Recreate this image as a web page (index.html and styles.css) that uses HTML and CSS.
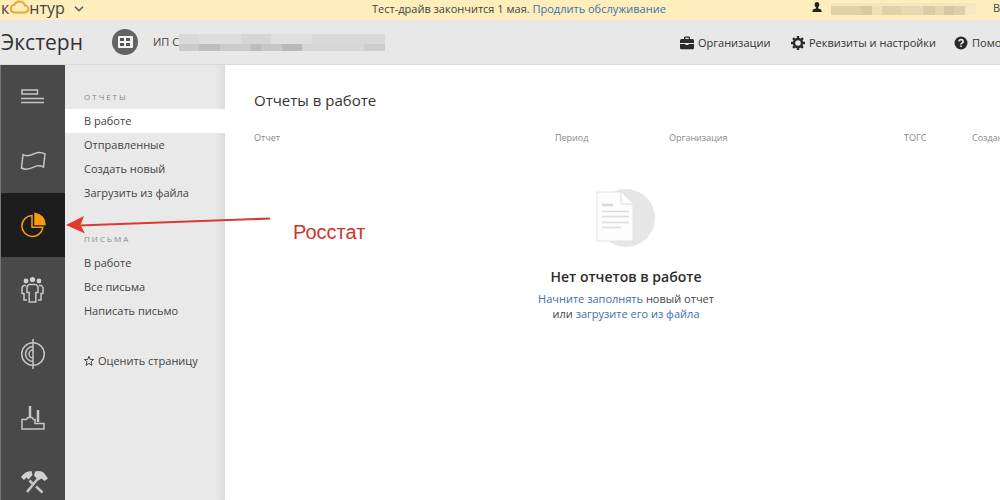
FILE: index.html
```html
<!DOCTYPE html>
<html lang="ru">
<head>
<meta charset="utf-8">
<title>Контур.Экстерн — Отчеты в работе</title>
<link rel="stylesheet" href="styles.css">
</head>
<body>
<div class="app">
  <div class="topbar">
    <a class="logo" href="#" aria-label="контур"><span>к</span><svg class="cloud" viewBox="0 0 20 14" width="20" height="14"><path d="M5 12.500h10.500a3.500 3.500 0 0 0 .6-7A5.800 5.800 0 0 0 5.300 4.800 3.900 3.900 0 0 0 5 12.500z"/></svg><span>нтур</span><svg class="chevron" viewBox="0 0 10 6" width="10" height="6"><path d="M1 .8l4 4 4-4"/></svg></a>
    <p class="trial">Тест-драйв закончится 1 мая. <a href="#">Продлить обслуживание</a></p>
    <div class="account">
      <svg class="user" viewBox="0 0 10 10" width="10" height="10"><path d="M5 0C3.500 0 2.700 1 2.700 2.500c0 1.500.6 2.500 1.300 3v1C2.500 7 .5 7.300.5 8.500V10h9V8.500C9.500 7.300 7.500 7 6 6.500v-1c.7-.5 1.300-1.500 1.300-3C7.300 1 6.500 0 5 0z"/></svg>
      <span class="mask mask-user"></span>
      <a class="exit" href="#">Выйти</a>
    </div>
  </div>

  <header class="header">
    <div class="product">Экстерн</div>
    <button class="org-switch" aria-label="Выбрать сервис"><svg viewBox="0 0 26 26" width="26" height="26"><circle cx="13" cy="13" r="13" fill="#636363"/><rect x="6" y="7" width="15" height="12" rx="1" fill="#f2f2f2"/><path fill="#555" d="M8 9h4v3H8zM14 9h4v3h-4zM8 14h4v3H8zM14 14h4v3h-4z"/></svg></button>
    <div class="org">ИП С<span class="mask mask-org"></span></div>
    <nav class="tools">
      <a class="organizations" href="#"><svg viewBox="0 0 14 14" width="14" height="14"><path d="M4 3V1.800Q4 .5 5.300.5h3.400Q10 .5 10 1.800V3h2.500Q14 3 14 4.500V7H0V4.500Q0 3 1.500 3zM5.300 3h3.400V1.800H5.300zM0 8h5.500v1h3V8H14v4q0 1.200-1.200 1.200H1.200Q0 13.200 0 12z"/></svg>Организации</a>
      <a class="settings" href="#"><svg viewBox="0 0 14 14" width="14" height="14"><circle cx="7" cy="7" r="4" fill="none" stroke="#2b2b2b" stroke-width="2.400"/><path fill="none" stroke="#2b2b2b" stroke-width="2.400" d="M7 0v2.500M7 11.500V14M0 7h2.500M11.500 7H14M2.050 2.050l1.800 1.800M10.150 10.150l1.800 1.800M2.050 11.950l1.800-1.800M10.150 3.850l1.800-1.800"/></svg>Реквизиты и настройки</a>
      <a href="#"><svg viewBox="0 0 14 14" width="14" height="14"><circle cx="7" cy="7" r="6.500"/><path d="M4.800 5.400Q5 3.600 7 3.600t2.200 1.700Q9.200 6.400 8 7 7 7.500 7 8.400M7 9.500v1.500" fill="none" stroke="#eee" stroke-width="1.600"/></svg>Помощь</a>
    </nav>
  </header>

  <div class="body">
    <nav class="rail" aria-label="Разделы">
      <a href="#" aria-label="ФНС"><svg viewBox="0 0 28 28" width="28" height="28"><path d="M3 6h15.500v4H3zM2 14.500h23M2 18.500h23"/></svg></a>
      <a href="#" aria-label="ПФР"><svg viewBox="0 0 28 28" width="28" height="28"><path d="M4 6.500c4 2.800 8 .8 11-.6 3-1.400 7-2 11 .1l-1.500 13c-4-2-7-1.500-10 .2-3 1.500-7 3.500-12 .8z"/></svg></a>
      <a href="#" class="active" aria-label="Росстат"><svg viewBox="0 0 28 28" width="28" height="28"><path d="M13 3.500a10.500 10.500 0 1 0 10.800 11.800H13z"/><path class="fill" d="M16 1.500a11 11 0 0 1 10 11H16z"/></svg></a>
      <a href="#" aria-label="ФСС"><svg viewBox="0 0 28 28" width="28" height="28"><g class="fill"><circle cx="7" cy="5" r="2.400"/><circle cx="13.500" cy="3.500" r="2.600"/><circle cx="20" cy="5" r="2.400"/></g><path d="M10 8.500h7l2 2v6h-2.200V26h-6.600v-9.500H8v-6zM7 9.500H4.500L3 11.500v6h2V24h3M20 9.500h2.500l1.500 2v6h-2V24h-3"/></svg></a>
      <a href="#" aria-label="РПН"><svg viewBox="0 0 28 28" width="28" height="28"><circle cx="14" cy="14" r="11.300"/><path d="M14-1v30M14 6.500a7.500 7.500 0 0 0 0 15M14 10a4 4 0 0 0 0 8"/></svg></a>
      <a href="#" aria-label="РАР"><svg viewBox="0 0 28 28" width="28" height="28"><path d="M3 25v-9.500h4.500l1.500-2h4l1.500 2h1.500v4H25V25z"/><path class="thick" d="M11 2v11M19 6v12"/></svg></a>
      <a href="#" aria-label="Сервис"><svg viewBox="0 0 28 28" width="28" height="28"><path class="fill" d="M2 9Q6 3 12.500 3L13.500 7 9.500 11.500 7.500 9.500 5 12zM16 3.500q6.500-1.500 9 1.500l4 5.500-3.500 2.500-3-2.500-3 2-4.500-5z"/><path class="thick" d="M19 10.500L8 24M10.500 12.500l4 4M17 18.500l6.500 6"/></svg></a>
    </nav>

    <nav class="menu">
      <h2>Отчеты</h2>
      <ul>
        <li class="current"><a href="#">В работе</a></li>
        <li><a href="#">Отправленные</a></li>
        <li><a href="#">Создать новый</a></li>
        <li><a href="#">Загрузить из файла</a></li>
      </ul>
      <h2>Письма</h2>
      <ul>
        <li><a href="#">В работе</a></li>
        <li><a href="#">Все письма</a></li>
        <li><a href="#">Написать письмо</a></li>
      </ul>
      <a class="rate" href="#"><svg viewBox="0 0 10 10" width="10" height="10"><path d="M5 .3l1.300 3.200h3.400L7 5.700l1 3.700L5 7.400 2 9.400l1-3.700L.3 3.500h3.400z"/></svg>Оценить страницу</a>
    </nav>

    <main class="content">
      <h1>Отчеты в работе</h1>
      <table class="reports">
        <colgroup><col class="c-report"><col class="c-period"><col class="c-org"><col class="c-togs"><col class="c-date"></colgroup>
        <thead><tr><th>Отчет</th><th>Период</th><th>Организация</th><th>ТОГС</th><th>Создан</th></tr></thead>
      </table>
      <section class="empty">
        <svg viewBox="0 0 58 58" width="58" height="58"><circle cx="29" cy="29" r="29" fill="#e6e6e6"/><path d="M0 3h24l12 12v37H0z" fill="#fdfdfd" stroke="#e3e3e3"/><path d="M24 3v12h12" fill="#fff" stroke="#dcdcdc"/><path d="M5 16h11" stroke="#d8d8d8" stroke-width="2.500"/><path d="M5 22.500h27M5 27.500h27M5 33.500h27M5 38.500h19" stroke="#dcdcdc" stroke-width="1.500"/></svg>
        <h3>Нет отчетов в работе</h3>
        <p><a href="#">Начните заполнять</a> новый отчет<br>или <a href="#">загрузите его из файла</a></p>
      </section>
    </main>
  </div>

  <div class="callout">
    <svg viewBox="0 0 206 24" width="206" height="24"><path d="M14 14.500L205 7.500" stroke="#d93a32" stroke-width="2.200"/><path d="M1 14L19 5 15.500 14 20 22.500z" fill="#e03a2f"/></svg>
    <span>Росстат</span>
  </div>
</div>
</body>
</html>
```
FILE: styles.css
```css
* { box-sizing: border-box; }

body {
  margin: 0;
  color: #444;
  background: #fff;
  font: 11px/16px "Open Sans", "Noto Sans", sans-serif;
}

h1, h2, h3, p, ul { margin: 0; padding: 0; }
ul { list-style: none; }
a { color: inherit; text-decoration: none; }
svg { display: block; flex: none; overflow: visible; }

.app {
  position: relative;
  display: flex;
  flex-direction: column;
  height: 100vh;
  overflow: hidden;
}

.topbar {
  display: flex;
  align-items: center;
  flex: none;
  height: 20px;
  background: #fdeebb;
  white-space: nowrap;
}

.logo {
  display: flex;
  align-items: center;
  flex: 0 0 372px;
  padding: 0 0 5px 1px;
  font-size: 16px;
  line-height: 14px;
}
.cloud { margin-bottom: 2px; }
.cloud path { fill: none; stroke: #f0a43a; stroke-width: 2; }
.chevron { margin: 2px 0 0 9px; }
.chevron path { fill: none; stroke: #555; stroke-width: 1.5; }

.trial { flex: 1; padding-bottom: 3px; }
.trial a, .empty a { color: #3d6eb0; }

.account {
  display: flex;
  flex: 0 0 188px;
  min-width: 0;
  padding-bottom: 4px;
}
.user { margin-top: 2px; fill: #222; }
.exit { margin-left: 17px; }

.mask { display: inline-block; flex: none; }
.mask-user {
  width: 145px;
  height: 12px;
  margin: 3px 0 0 9px;
  background:
    linear-gradient(90deg, #e0d2a4 0 30px, #d8cba0 30px 41px, #efe1b2 41px 51px, #dfd2a6 51px 70px, #e8dab0 70px 92px, #d9cda5 92px 104px, #e4d7ac 104px 113px, #d5c9a4 113px 123px, #ddd0a8 123px 134px, #f4e9c0 134px) 0 100% / 100% 9px no-repeat,
    #f3e7bd;
}
.mask-org {
  width: 206px;
  height: 17px;
  background:
    linear-gradient(90deg, #cacaca 0 20px, #bebebe 20px 41px, #cbcbcb 41px 72px, #bdbdbd 72px 82px, #c6c6c6 82px 103px, #b9b9b9 103px 123px, #d6d6d6 123px 185px, #cdcdcd 185px) 0 100% / 100% 7px no-repeat,
    linear-gradient(90deg, #d9d9d9 0 20px, #dedede 20px 62px, #d6d6d6 62px 92px, #dfdfdf 92px 133px, #d9d9d9 133px);
}

.header {
  display: flex;
  align-items: center;
  flex: none;
  height: 45px;
  background: #e8e8e8;
  border-bottom: 1px solid #d9d9d9;
  white-space: nowrap;
}
.product {
  flex: 0 0 112px;
  padding-left: 1px;
  color: #333;
  font-size: 21px;
  line-height: 28px;
}
.org-switch { padding: 0; border: 0; background: none; cursor: pointer; }
.org { display: flex; align-items: center; flex: 1; padding-left: 15px; }
.tools { display: flex; flex: 0 0 320px; min-width: 0; padding-top: 2px; color: #333; }
.tools a { display: flex; align-items: center; flex: none; gap: 4px; }
.tools svg { fill: #2b2b2b; }
.tools .organizations { flex-basis: 111px; }
.tools .settings { flex-basis: 163px; }

.body { display: flex; flex: 1; min-height: 0; }

.rail { flex: 0 0 65px; background: #494949; border-left: 1px solid #777; }
.rail a {
  display: flex;
  align-items: center;
  justify-content: center;
  height: 64px;
  padding-top: 2px;
}
.rail a.active { background: #1d1d1d; }
.rail path, .rail circle { fill: none; stroke: #c6c6c6; stroke-width: 1.5; }
.rail .fill, .rail .fill circle { fill: #d0d0d0; stroke: none; }
.rail .thick { stroke-width: 2.5; }
.rail .active path { stroke: #f39c1d; }
.rail .active .fill { fill: #fb9d0c; }

.menu {
  flex: 0 0 160px;
  padding-top: 24px;
  background: linear-gradient(90deg, transparent 150px, #dcdcdc), #e9e9e9;
}
.menu h2 {
  margin-bottom: 4px;
  padding-left: 19px;
  color: #888;
  font-size: 8px;
  line-height: 16px;
  font-weight: 400;
  letter-spacing: 2px;
  text-transform: uppercase;
}
.menu ul { margin-bottom: 26px; }
.menu li a { display: block; padding: 4px 19px; }
.menu .current { background: #fff; }
.rate { display: flex; align-items: center; gap: 4px; padding: 4px 19px; white-space: nowrap; }
.rate path { fill: none; stroke: #444; }

.content { flex: 1; min-width: 0; padding: 25px 0 0 29px; overflow: hidden; }
.content h1 { color: #333; font-size: 15px; line-height: 20px; font-weight: 400; }

.reports {
  width: 100%;
  min-width: 800px;
  margin-top: 20px;
  table-layout: fixed;
  border-collapse: collapse;
}
.reports th {
  padding: 0;
  color: #888;
  font-size: 9px;
  line-height: 16px;
  font-weight: 400;
  text-align: left;
}
.c-report { width: 301px; }
.c-period { width: 114px; }
.c-org { width: 235px; }
.c-togs { width: 68px; }

.empty {
  display: flex;
  flex-direction: column;
  align-items: center;
  margin-top: 43px;
  padding-right: 2px;
  text-align: center;
}
.empty h3 {
  margin: 20px 0 4px;
  color: #2b2b2b;
  font-size: 14px;
  line-height: 20px;
  font-weight: 600;
}
.empty p { line-height: 15px; }

.callout {
  position: absolute;
  top: 211px;
  left: 65px;
  display: flex;
  gap: 22px;
  color: #d2332d;
  font: 20px/24px "Liberation Sans", Arial, sans-serif;
}
.callout span { padding-top: 9px; }
```
